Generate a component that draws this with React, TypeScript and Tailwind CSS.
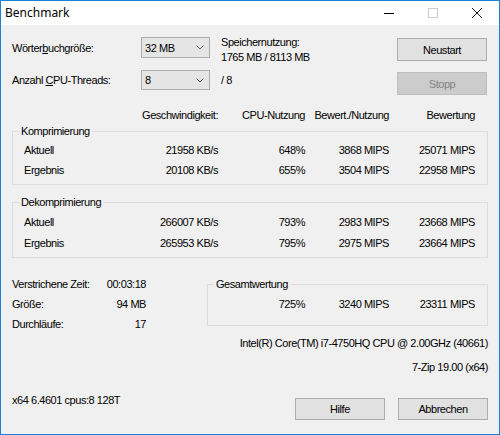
import React from "react";

const font = { fontFamily: '"Liberation Sans", Arial, sans-serif' };

function Chevron() {
  return (
    <svg width="8" height="5" viewBox="0 0 8 5" className="block">
      <path d="M0.5 0.5 L4 4 L7.5 0.5" fill="none" stroke="#5a5a5a" strokeWidth="1" />
    </svg>
  );
}

function Dropdown({ value, h }: { value: string; h: string }) {
  return (
    <div className={`flex ${h} w-[69px] items-center justify-between border border-[#adadad] bg-[#e5e5e5] pl-[3px] pr-[5px]`}>
      <span>{value}</span>
      <Chevron />
    </div>
  );
}

function Btn({ label, disabled, h }: { label: string; disabled?: boolean; h: string }) {
  return (
    <div
      className={`flex ${h} w-[90px] items-center justify-center border ${
        disabled ? "border-[#bfbfbf] bg-[#cccccc] text-[#838383]" : "border-[#adadad] bg-[#e1e1e1] text-black"
      }`}
    >
      {label}
    </div>
  );
}

function Vals({ v, first }: { v: string[]; first: string }) {
  return (
    <>
      <div className={`${first} text-right`}>{v[0]}</div>
      <div className="w-[87px] text-right">{v[1]}</div>
      <div className="w-[84px] text-right">{v[2]}</div>
      <div className="w-[86px] text-right">{v[3]}</div>
    </>
  );
}

function Row({ label, v, h }: { label: string; v: string[]; h: string }) {
  return (
    <div className={`flex ${h} items-center`}>
      <div className="box-content w-[116px] pl-[11px]">{label}</div>
      <Vals first="w-[78px]" v={v} />
    </div>
  );
}

function Group({
  title,
  children,
  className,
}: {
  title: string;
  children: React.ReactNode;
  className: string;
}) {
  return (
    <div className={`flex flex-col border border-[#dcdcdc] ${className}`}>
      <div className="-mt-[8px] ml-[6px] h-[14px] w-fit bg-[#f0f0f0] px-[2px] leading-[14px]">{title}</div>
      {children}
    </div>
  );
}

export default function App() {
  return (
    <div
      className="flex h-[435px] w-[500px] flex-col overflow-hidden border border-[#1883d7] bg-[#f0f0f0] text-[11px] leading-[14px] tracking-[-0.45px] text-black"
      style={font}
    >
      {/* Title bar */}
      <div className="flex h-[24px] shrink-0 items-center bg-white">
        <div
          className="pl-[4px] text-[12px] tracking-normal text-black"
          style={{ fontFamily: '"Noto Sans", "Open Sans", sans-serif' }}
        >
          Benchmark
        </div>
        <div className="ml-auto flex h-full">
          <div className="flex w-[44px] items-center justify-center">
            <svg width="10" height="10" viewBox="0 0 10 10">
              <path d="M0 5.5 H10" stroke="#000" strokeWidth="1" />
            </svg>
          </div>
          <div className="flex w-[44px] items-center justify-center">
            <svg width="10" height="10" viewBox="0 0 10 10">
              <rect x="0.5" y="0.5" width="9" height="9" fill="none" stroke="#cccccc" strokeWidth="1" />
            </svg>
          </div>
          <div className="flex w-[44px] items-center justify-center">
            <svg width="10" height="10" viewBox="0 0 10 10">
              <path d="M0 0 L10 10 M10 0 L0 10" stroke="#1a1a1a" strokeWidth="1" />
            </svg>
          </div>
        </div>
      </div>

      {/* Content */}
      <div className="flex flex-1 flex-col pl-[11px]">
        {/* Top block */}
        <div className="mt-[10px] flex items-start">
          <div className="flex w-[129px] flex-col">
            <div className="mt-[2px] flex h-[21px] items-center">
              <span>
                Wörter<u>b</u>uchgröße:
              </span>
            </div>
            <div className="mt-[12px] flex h-[20px] items-center">
              <span>
                Anzahl <u>C</u>PU-Threads:
              </span>
            </div>
          </div>
          <div className="flex w-[69px] flex-col">
            <div className="mt-[2px]">
              <Dropdown value="32 MB" h="h-[21px]" />
            </div>
            <div className="mt-[12px]">
              <Dropdown value="8" h="h-[20px]" />
            </div>
          </div>
          <div className="ml-[11px] flex w-[176px] flex-col leading-[15px]">
            <div>Speichernutzung:</div>
            <div>1765 MB / 8113 MB</div>
            <div className="mt-[7px] leading-[16px]">/ 8</div>
          </div>
          <div className="flex flex-col">
            <div className="mt-[3px]">
              <Btn label="Neustart" h="h-[23px]" />
            </div>
            <div className="mt-[11px]">
              <Btn label="Stopp" disabled h="h-[23px]" />
            </div>
          </div>
        </div>

        {/* Header row */}
        <div className="mt-[10px] flex h-[20px] items-center">
          <div className="w-[128px]" />
          <Vals first="w-[78px]" v={["Geschwindigkeit:", "CPU-Nutzung", "Bewert./Nutzung", "Bewertung"]} />
        </div>

        {/* Komprimierung */}
        <Group title="Komprimierung" className="mt-[6px] w-[476px] pb-[4px]">
          <div className="mt-[2px]" />
          <Row h="h-[20px]" label="Aktuell" v={["21958 KB/s", "648%", "3868 MIPS", "25071 MIPS"]} />
          <Row h="h-[20px]" label="Ergebnis" v={["20108 KB/s", "655%", "3504 MIPS", "22958 MIPS"]} />
        </Group>

        {/* Dekomprimierung */}
        <Group title="Dekomprimierung" className="mt-[17px] w-[476px] pb-[4px]">
          <div className="mt-[2px]" />
          <Row h="h-[21px]" label="Aktuell" v={["266007 KB/s", "793%", "2983 MIPS", "23668 MIPS"]} />
          <Row h="h-[21px]" label="Ergebnis" v={["265953 KB/s", "795%", "2975 MIPS", "23664 MIPS"]} />
        </Group>

        {/* Bottom section */}
        <div className="mt-[16px] flex items-start">
          <div className="flex w-[134px] flex-col">
            <div className="flex h-[20px] items-center justify-between">
              <span>Verstrichene Zeit:</span>
              <span>00:03:18</span>
            </div>
            <div className="flex h-[20px] items-center justify-between">
              <span>Größe:</span>
              <span>94 MB</span>
            </div>
            <div className="flex h-[20px] items-center justify-between">
              <span>Durchläufe:</span>
              <span>17</span>
            </div>
          </div>
          <Group title="Gesamtwertung" className="ml-[61px] mt-[10px] w-[281px] pb-[11px]">
            <div className="mt-[3px] flex h-[20px] items-center">
              <div className="w-[97px] text-right">725%</div>
              <div className="w-[84px] text-right">3240 MIPS</div>
              <div className="w-[86px] text-right">23311 MIPS</div>
            </div>
          </Group>
        </div>

        <div className="mt-[1px] flex h-[16px] w-[476px] items-center justify-end">
          Intel(R) Core(TM) i7-4750HQ CPU @ 2.00GHz (40661)
        </div>
        <div className="mt-[8px] flex h-[16px] w-[476px] items-center justify-end">7-Zip 19.00 (x64)</div>

        <div className="mt-[17px] flex w-[476px] items-start">
          <div className="flex h-[16px] items-center">x64 6.4601 cpus:8 128T</div>
          <div className="ml-auto mt-[6px] flex gap-[13px]">
            <Btn label="Hilfe" h="h-[22px]" />
            <Btn label="Abbrechen" h="h-[22px]" />
          </div>
        </div>
      </div>
    </div>
  );
}
